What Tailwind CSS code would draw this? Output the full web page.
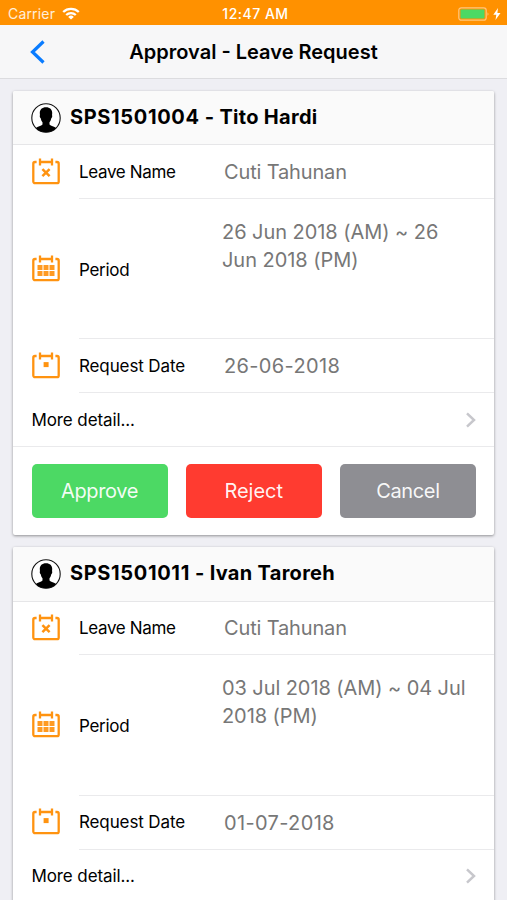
<!DOCTYPE html>
<html lang="en">
<head>
<meta charset="utf-8">
<title>Approval - Leave Request</title>
<script src="https://cdn.jsdelivr.net/npm/@tailwindcss/browser@4"></script>
</head>
<body class="h-[900px] w-[507px] overflow-hidden bg-[#efeff4] font-[Inter,'Liberation_Sans',sans-serif] text-black">
<svg width="0" height="0" class="absolute">
  <symbol id="avatar" viewBox="0 0 30 30">
    <circle cx="15" cy="15" r="14.2" fill="#fff" stroke="#111" stroke-width="1.100"/>
    <path d="M15 4.200c-4 0-6.200 2.300-6.200 5.800 0 1 .1 1.600.2 2.300-.5.3-.3 2.300.7 3 .4 1.900 1 3.200 1.800 4v2.300c-1.200 1.500-5 1.900-6.600 3.400a14 14 0 0 0 20.200 0c-1.600-1.500-5.400-1.900-6.600-3.400v-2.300c.8-.8 1.400-2.100 1.800-4 1-.7 1.200-2.700.7-3 .1-.7.2-1.300.2-2.300 0-3.500-2.200-5.800-6.200-5.800z" fill="#000"/>
  </symbol>
  <symbol id="cal" viewBox="0 0 28 27">
    <path d="M4.600 4H3a1.700 1.700 0 0 0-1.700 1.700v17.800A1.700 1.700 0 0 0 3 25.200h22a1.700 1.700 0 0 0 1.700-1.700V5.700A1.700 1.700 0 0 0 25 4h-1.600M8 4h12M8 .4v7M20 .4v7" fill="none" stroke="#ff9310" stroke-width="2.300"/>
  </symbol>
  <symbol id="x" viewBox="0 0 28 27"><path d="M10.400 11.200l7.200 7M17.600 11.200l-7.200 7" stroke="#ff9310" stroke-width="2.500"/></symbol>
  <symbol id="grid" viewBox="0 0 28 27"><path d="M5.500 10h5v5h-5zM11.500 10h5v5h-5zM17.500 10h5v5h-5zM5.500 16h5v5h-5zM11.500 16h5v5h-5zM17.500 16h5v5h-5z" fill="#ff9a22"/></symbol>
  <symbol id="dot" viewBox="0 0 28 27"><path d="M11.600 10.100h5v5h-5z" fill="#ff9310"/></symbol>
  <symbol id="next" viewBox="0 0 10 16"><path d="M1 1.400L8 8L1 14.600" fill="none" stroke="#c7c7cc" stroke-width="2.500"/></symbol>
</svg>

<header>
  <div class="grid h-[25px] grid-cols-[1fr_auto_1fr] items-center bg-[#ff9100] px-2 pt-[3px] text-white">
    <div class="flex items-center gap-[7px]">
      <span class="text-[14px] leading-none tracking-[0.18px] text-white/85">Carrier</span>
      <svg class="-mt-[2px] h-[13px] w-[18px]" viewBox="0 0 18 13" fill="none" stroke="#fff" stroke-width="2.300"><path d="M1.200 5a11.200 11.200 0 0 1 15.600 0M4.200 8a7 7 0 0 1 9.600 0"/><path d="M9 12.600L6.200 9.900a4 4 0 0 1 5.600 0z" fill="#fff" stroke="none"/></svg>
    </div>
    <span class="pl-[4px] text-[14px] leading-none font-medium tracking-[0.5px]">12:47 AM</span>
    <div class="-mt-px flex items-center justify-end gap-[3px]">
      <svg class="h-[14px] w-[32px]" viewBox="0 0 32 14"><rect x=".8" y=".8" width="27.400" height="12.400" rx="2.500" fill="none" stroke="#ffc77c" stroke-width="1.200"/><rect x="2.500" y="2.500" width="24" height="9" rx="1" fill="#4cd964"/><path d="M29.500 5.200q2 1.800 0 3.600z" fill="#ffc77c"/></svg>
      <svg class="-mr-[2px] h-[12px] w-[8px]" viewBox="0 0 8 12"><path d="M5 0L.3 6.700h3L2.500 12l5-7H4.400z" fill="#fff"/></svg>
    </div>
  </div>
  <div class="grid h-[54px] grid-cols-[1fr_auto_1fr] items-center border-b border-[#dcdcdf] bg-[#f7f7f8]">
    <svg class="ml-[30px] h-[24px] w-[16px]" viewBox="0 0 16 24"><path d="M13.500 1.500L2.500 12l11 10.500" fill="none" stroke="#0a7cff" stroke-width="3.200"/></svg>
    <h1 class="pt-px text-[20px] font-semibold">Approval - Leave Request</h1>
    <span></span>
  </div>
</header>

<main class="flex h-[821px] flex-col gap-[12px] overflow-hidden px-[13px] pt-[12px]">
  <article class="h-[444px] shrink-0 rounded-[2px] bg-white shadow-[0_1px_3px_rgba(0,0,0,0.4)]">
    <div class="flex h-[54px] items-center rounded-t-[2px] border-b border-[#e6e6e8] bg-[#fafafa] pl-[18px]">
      <svg class="size-[30px]"><use href="#avatar"/></svg>
      <h2 class="ml-[9px] pb-px text-[20px] font-bold tracking-[0.3px]"><span class="tracking-[0.65px]">SPS1501004</span> - Tito Hardi</h2>
    </div>
    <div class="flex h-[54px] pl-[19px]">
      <svg class="mt-[13px] h-[27px] w-[28px]"><use href="#cal"/><use href="#x"/></svg>
      <div class="ml-[19px] flex flex-1 items-center border-b border-[#eaeaec]">
        <span class="w-[145px] pt-[2px] text-[17px] tracking-[-0.35px]">Leave Name</span>
        <span class="text-[20px] tracking-[-0.15px] text-[#777]">Cuti Tahunan</span>
      </div>
    </div>
    <div class="flex h-[140px] pl-[19px]">
      <svg class="mt-[56px] h-[27px] w-[28px]"><use href="#cal"/><use href="#grid"/></svg>
      <div class="ml-[19px] flex flex-1 items-start border-b border-[#eaeaec]">
        <span class="w-[143px] pt-[58px] text-[17px] leading-[26px] tracking-[-0.3px]">Period</span>
        <span class="pt-[19px] text-[20px] leading-[28px] tracking-[-0.05px] text-[#777]">26 Jun 2018 (AM) ~ 26<br>Jun 2018 (PM)</span>
      </div>
    </div>
    <div class="flex h-[54px] pl-[19px]">
      <svg class="mt-[13px] h-[27px] w-[28px]"><use href="#cal"/><use href="#dot"/></svg>
      <div class="ml-[19px] flex flex-1 items-center border-b border-[#eaeaec]">
        <span class="w-[145px] pt-[3px] text-[17px] tracking-[-0.12px]">Request Date</span>
        <span class="pt-px text-[20px] tracking-[0.35px] text-[#777]">26-06-2018</span>
      </div>
    </div>
    <div class="flex h-[54px] items-center justify-between border-b border-[#eaeaec] px-[18px]">
      <span class="pt-[2px] pl-[0.5px] text-[17px] tracking-[-0.1px]">More detail...</span>
      <svg class="h-[16px] w-[10px]"><use href="#next"/></svg>
    </div>
    <div class="grid grid-cols-3 gap-[18px] pt-[17px] pr-[18px] pl-[18.5px] text-[20px] tracking-[-0.35px] text-white/95">
      <button class="h-[54px] rounded-[5px] bg-[#4cd964]">Approve</button>
      <button class="h-[54px] rounded-[5px] bg-[#ff3b30] tracking-normal">Reject</button>
      <button class="h-[54px] rounded-[5px] bg-[#8e8e93]">Cancel</button>
    </div>
  </article>

  <article class="h-[444px] shrink-0 rounded-[2px] bg-white shadow-[0_1px_3px_rgba(0,0,0,0.4)]">
    <div class="flex h-[55px] items-center rounded-t-[2px] border-b border-[#e6e6e8] bg-[#fafafa] pl-[18px]">
      <svg class="size-[30px]"><use href="#avatar"/></svg>
      <h2 class="ml-[9px] pb-[2px] text-[20px] font-bold tracking-[0.3px]"><span class="tracking-[0.65px]">SPS1501011</span> - Ivan Taroreh</h2>
    </div>
    <div class="flex h-[53px] pl-[19px]">
      <svg class="mt-[12px] h-[27px] w-[28px]"><use href="#cal"/><use href="#x"/></svg>
      <div class="ml-[19px] flex flex-1 items-center border-b border-[#eaeaec]">
        <span class="w-[145px] pt-[2px] text-[17px] tracking-[-0.35px]">Leave Name</span>
        <span class="text-[20px] tracking-[-0.15px] text-[#777]">Cuti Tahunan</span>
      </div>
    </div>
    <div class="flex h-[141px] pl-[19px]">
      <svg class="mt-[56px] h-[27px] w-[28px]"><use href="#cal"/><use href="#grid"/></svg>
      <div class="ml-[19px] flex flex-1 items-start border-b border-[#eaeaec]">
        <span class="w-[143px] pt-[58px] text-[17px] leading-[26px] tracking-[-0.3px]">Period</span>
        <span class="pt-[19px] text-[20px] leading-[28px] tracking-[-0.08px] text-[#777]">03 Jul 2018 (AM) ~ 04 Jul<br>2018 (PM)</span>
      </div>
    </div>
    <div class="flex h-[54px] pl-[19px]">
      <svg class="mt-[12px] h-[27px] w-[28px]"><use href="#cal"/><use href="#dot"/></svg>
      <div class="ml-[19px] flex flex-1 items-center border-b border-[#eaeaec]">
        <span class="w-[145px] pt-px text-[17px] tracking-[-0.12px]">Request Date</span>
        <span class="text-[20px] tracking-[0.35px] text-[#777]">01-07-2018</span>
      </div>
    </div>
    <div class="flex h-[50px] items-center justify-between px-[18px] pt-px">
      <span class="pt-[2px] pl-[0.5px] text-[17px] tracking-[-0.1px]">More detail...</span>
      <svg class="h-[16px] w-[10px]"><use href="#next"/></svg>
    </div>
  </article>
</main>
</body>
</html>
